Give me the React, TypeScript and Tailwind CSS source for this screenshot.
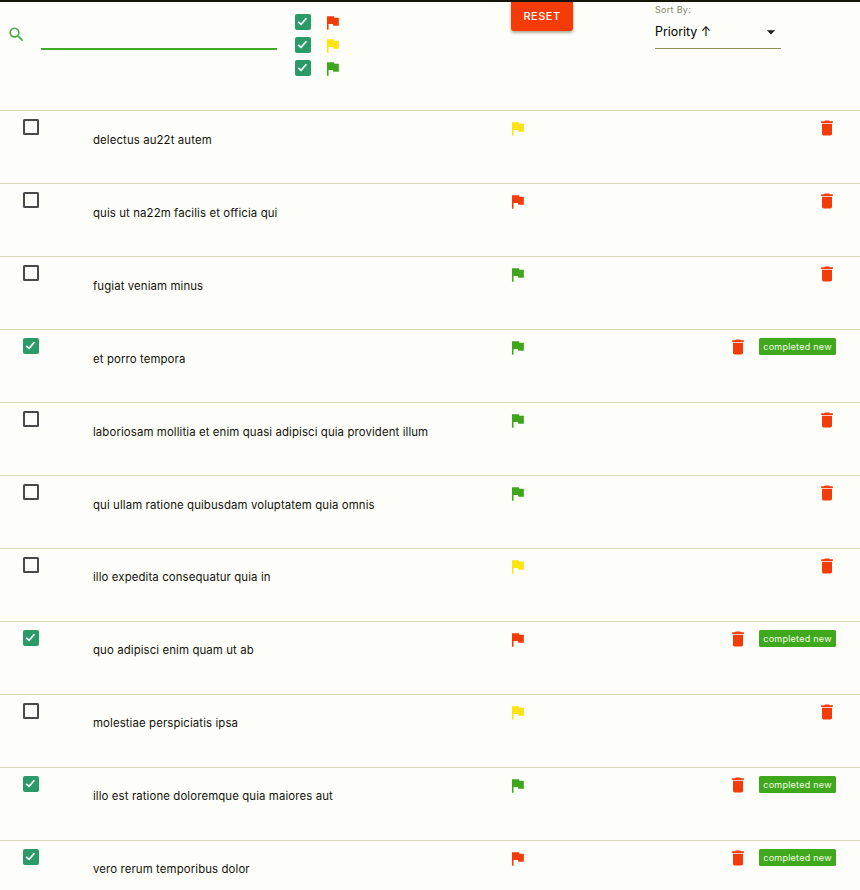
import React from "react";
import { MdFlag, MdDelete, MdSearch, MdArrowDropDown } from "react-icons/md";

type Priority = "low" | "medium" | "high";

interface Todo {
  title: string;
  priority: Priority;
  done: boolean;
}

const todos: Todo[] = [
  { title: "delectus au22t autem", priority: "medium", done: false },
  { title: "quis ut na22m facilis et officia qui", priority: "high", done: false },
  { title: "fugiat veniam minus", priority: "low", done: false },
  { title: "et porro tempora", priority: "low", done: true },
  { title: "laboriosam mollitia et enim quasi adipisci quia provident illum", priority: "low", done: false },
  { title: "qui ullam ratione quibusdam voluptatem quia omnis", priority: "low", done: false },
  { title: "illo expedita consequatur quia in", priority: "medium", done: false },
  { title: "quo adipisci enim quam ut ab", priority: "high", done: true },
  { title: "molestiae perspiciatis ipsa", priority: "medium", done: false },
  { title: "illo est ratione doloremque quia maiores aut", priority: "low", done: true },
  { title: "vero rerum temporibus dolor", priority: "high", done: true },
];

const flagColor: Record<Priority, string> = {
  high: "text-[#f23c0a]",
  medium: "text-[#fbe410]",
  low: "text-[#3ea61c]",
};

function Flag({ priority }: { priority: Priority }) {
  return <MdFlag size={19} className={`shrink-0 ${flagColor[priority]}`} />;
}

function Checkbox({ checked }: { checked: boolean }) {
  if (!checked) {
    return <span className="block size-4 shrink-0 rounded-[1.5px] border-2 border-[#48484a]" />;
  }
  return (
    <span className="block size-4 shrink-0 rounded-[2px] bg-[#2a9a66]">
      <svg viewBox="0 0 16 16" className="size-4" fill="none" stroke="#fff" strokeWidth="1.7">
        <path d="M3.2 7.8 L6.1 10.3 L11.4 4.2" />
      </svg>
    </span>
  );
}

function TodoRow({ todo, raised }: { todo: Todo; raised: boolean }) {
  return (
    <li className="flex h-[73px] shrink-0 items-start border-t border-[#d9d9b8]">
      <div className="w-[93px] shrink-0 pt-2 pl-[23px]">
        <Checkbox checked={todo.done} />
      </div>
      <p className={`w-[415px] shrink-0 text-[11.4px] leading-4 tracking-[0.11px] whitespace-nowrap text-[#12120a] ${raised ? "pt-5" : "pt-[21px]"}`}>
        {todo.title}
      </p>
      <div className="pt-2">
        <Flag priority={todo.priority} />
      </div>
      <div className={`ml-auto flex items-start ${todo.done ? "pr-6" : "pr-[23px]"}`}>
        <MdDelete size={20} className="mt-[7px] text-[#f23c0a]" />
        {todo.done && (
          <span className="mt-2 ml-[11px] flex h-[17px] w-[77px] items-center justify-center rounded-[1.5px] bg-[#40a81c] text-[9px] leading-[17px] tracking-[0.25px] whitespace-nowrap text-[#f4fbe8]">
            completed new
          </span>
        )}
      </div>
    </li>
  );
}

function Toolbar() {
  return (
    <header className="flex h-[108px] shrink-0 items-start">
      <div className="flex w-[295px] shrink-0 items-start">
        <MdSearch size={19} className="mt-[23px] ml-[7px] text-[#45ad45]" />
        <input
          type="text"
          aria-label="Search"
          className="ml-[15px] h-12 w-[236px] border-b-2 border-[#3fa928] bg-transparent text-xs outline-none"
        />
      </div>
      <div className="flex w-[216px] shrink-0 flex-col gap-[7px] pt-3">
        {(["high", "medium", "low"] as Priority[]).map((priority) => (
          <label key={priority} className="flex h-4 items-center gap-3">
            <Checkbox checked />
            <span className="pt-px">
              <Flag priority={priority} />
            </span>
          </label>
        ))}
      </div>
      <button className="h-[29px] w-[62px] rounded-b-[3px] bg-[#f53c08] text-[11px] font-medium tracking-[0.5px] text-white shadow-[0_2px_3px_rgba(60,60,0,0.4)]">
        RESET
      </button>
      <div className="ml-[82px] flex h-[47px] w-[126px] flex-col border-b border-[#8c8c58]">
        <span className="mt-px text-[9px] leading-[13px] tracking-[0.3px] text-[#85856a]">Sort By:</span>
        <div className="mt-1.5 flex h-5 items-center justify-between leading-4 text-black">
          <span className="text-[12.4px]">Priority ↑</span>
          <MdArrowDropDown size={20} className="text-[#1c1c1c]" />
        </div>
      </div>
    </header>
  );
}

export default function App() {
  return (
    <div className="flex h-[890px] w-[860px] flex-col overflow-hidden border-t-2 border-[#14140a] bg-[#fdfdf9] font-['Inter','Liberation_Sans',sans-serif]">
      <Toolbar />
      <ul className="flex flex-col">
        {todos.map((todo, index) => (
          <TodoRow key={todo.title} todo={todo} raised={index > 5} />
        ))}
      </ul>
    </div>
  );
}
